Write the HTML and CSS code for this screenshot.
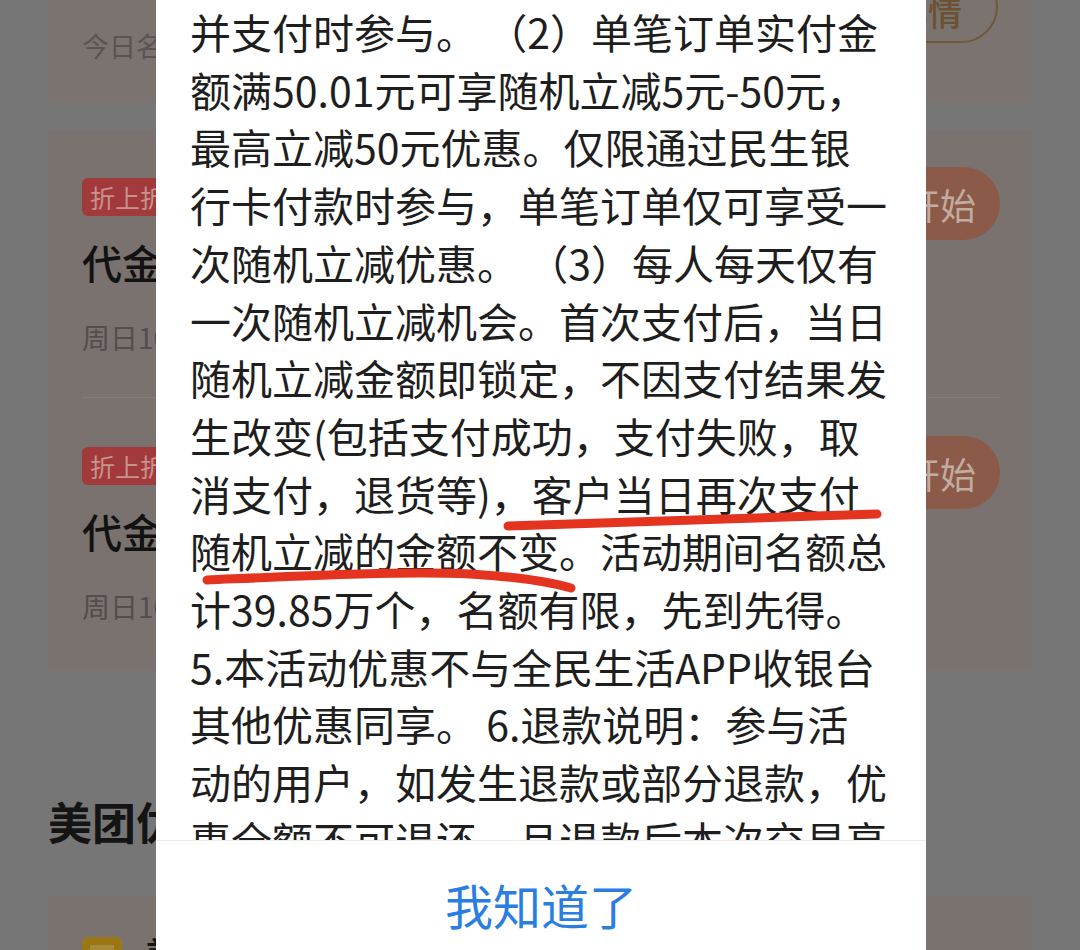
FILE: index.html
```html
<!DOCTYPE html>
<html lang="zh-CN">
<head>
<meta charset="utf-8">
<title>活动规则</title>
<link rel="stylesheet" href="styles.css">
</head>
<body>
<div class="app">
  <div class="card-top">
    <div class="today">今日名额已抢完</div>
    <div class="detail-btn">查看详情</div>
  </div>
  <div class="gap1"></div>
  <div class="card-main">
    <div class="item first">
      <div class="item-info">
        <span class="tag">折上折优惠</span>
        <div class="item-title">代金券满减优惠</div>
        <div class="item-sub">周日10:00开抢</div>
      </div>
      <div class="pill">开始</div>
    </div>
    <div class="item second">
      <div class="item-info">
        <span class="tag">折上折优惠</span>
        <div class="item-title">代金券满减优惠</div>
        <div class="item-sub">周日10:00开抢</div>
      </div>
      <div class="pill">开始</div>
    </div>
  </div>
  <div class="section-title">美团优惠专区</div>
  <div class="card-bottom">
    <span class="gold-icon"></span>
    <span class="bottom-text">美团外卖</span>
  </div>
</div>

<div class="modal">
  <div class="modal-body">
    <div class="ln">并支付时参与。 （2）单笔订单实付金</div>
    <div class="ln">额满50.01元可享随机立减5元-50元，</div>
    <div class="ln">最高立减50元优惠。仅限通过民生银</div>
    <div class="ln">行卡付款时参与，单笔订单仅可享受一</div>
    <div class="ln">次随机立减优惠。 （3）每人每天仅有</div>
    <div class="ln">一次随机立减机会。首次支付后，当日</div>
    <div class="ln">随机立减金额即锁定，不因支付结果发</div>
    <div class="ln">生改变(包括支付成功，支付失败，取</div>
    <div class="ln">消支付，退货等)，客户当日再次支付</div>
    <div class="ln">随机立减的金额不变。活动期间名额总</div>
    <div class="ln">计39.85万个，名额有限，先到先得。</div>
    <div class="ln">5.本活动优惠不与全民生活APP收银台</div>
    <div class="ln">其他优惠同享。 6.退款说明：参与活</div>
    <div class="ln">动的用户，如发生退款或部分退款，优</div>
    <div class="ln">惠全额不可退还，且退款后本次交易享</div>
  </div>
  <div class="modal-foot">我知道了</div>
</div>

<svg class="marks" width="1080" height="950" viewBox="0 0 1080 950">
  <path d="M508 526 C 600 523 720 519 877 514" />
  <path d="M207 580 C 300 576 400 571 470 574 C 520 577 550 582 571 588" />
</svg>
</body>
</html>
```

FILE: styles.css
```css
html, body {
  margin: 0;
  padding: 0;
}
body {
  width: 1080px;
  height: 950px;
  overflow: hidden;
  position: relative;
  font-family: "Noto Sans CJK SC", "Noto Sans", sans-serif;
  background: #767676;
}
.app {
  width: 1080px;
  height: 950px;
  box-sizing: border-box;
  padding: 0 48px;
  background: #767676;
  overflow: hidden;
}
.card-top {
  height: 103px;
  background: #7b7370;
  display: flex;
  justify-content: space-between;
  align-items: flex-start;
  padding: 0 34px;
}
.today {
  margin-top: 29px;
  font-size: 27px;
  line-height: 34px;
  color: #5a5454;
}
.detail-btn {
  margin-top: -30px;
  height: 73px;
  box-sizing: border-box;
  border: 2px solid #6e5a3b;
  border-radius: 40px;
  padding: 0 34px;
  display: flex;
  align-items: center;
  font-size: 34px;
  font-weight: 500;
  color: #6a5233;
  padding-top: 10px;
}
.gap1 {
  height: 27px;
}
.card-main {
  background: #79726f;
  padding: 0 32px 0 34px;
}
.item {
  display: flex;
  justify-content: space-between;
  align-items: flex-start;
}
.item.first {
  padding: 48px 0 40px;
  border-bottom: 1px solid #827b79;
}
.item.second {
  padding: 49px 0 45px;
}
.item-info {
  display: flex;
  flex-direction: column;
  align-items: flex-start;
}
.tag {
  height: 38px;
  line-height: 38px;
  padding: 0 8px;
  border-radius: 6px;
  background: #a23a3b;
  color: #c8928d;
  font-size: 25px;
}
.item-title {
  margin-top: 21px;
  font-size: 40px;
  line-height: 50px;
  font-weight: 500;
  color: #121212;
}
.item-sub {
  margin-top: 30px;
  font-size: 28px;
  line-height: 40px;
  color: #534e4d;
}
.pill {
  margin-top: -11px;
  height: 73px;
  border-radius: 37px;
  background: #8b5a49;
  color: #c2aba0;
  font-size: 36px;
  display: flex;
  align-items: center;
  padding: 0 24px 0 60px;
}
.section-title {
  margin-top: 122px;
  font-size: 44px;
  line-height: 56px;
  font-weight: 700;
  color: #141414;
}
.card-bottom {
  margin-top: 47px;
  background: #79726f;
  height: 120px;
  padding: 41px 34px 0;
  display: flex;
  align-items: flex-start;
  gap: 22px;
}
.gold-icon {
  width: 40px;
  height: 40px;
  border-radius: 7px;
  background: #9a7614;
  box-shadow: inset 0 0 0 8px #9a7614, inset 0 0 0 40px #a8893a;
}
.bottom-text {
  margin-top: -4px;
  font-size: 36px;
  line-height: 40px;
  font-weight: 500;
  color: #151515;
}

.modal {
  position: absolute;
  left: 156px;
  top: 0;
  width: 770px;
  height: 966px;
  background: #ffffff;
  display: flex;
  flex-direction: column;
}
.modal-body {
  height: 840px;
  overflow: hidden;
  box-sizing: border-box;
  padding: 3px 20px 0 34px;
  font-size: 41px;
  line-height: 57.7px;
  color: #1e1e1e;
}
.ln {
  white-space: nowrap;
}
.modal-foot {
  height: 126px;
  border-top: 1px solid #ebebeb;
  display: flex;
  align-items: center;
  justify-content: center;
  font-size: 48px;
  color: #2a7de1;
  box-sizing: border-box;
}
.marks {
  position: absolute;
  left: 0;
  top: 0;
  pointer-events: none;
}
.marks path {
  fill: none;
  stroke: #e4331f;
  stroke-width: 9;
  stroke-linecap: round;
}
```
